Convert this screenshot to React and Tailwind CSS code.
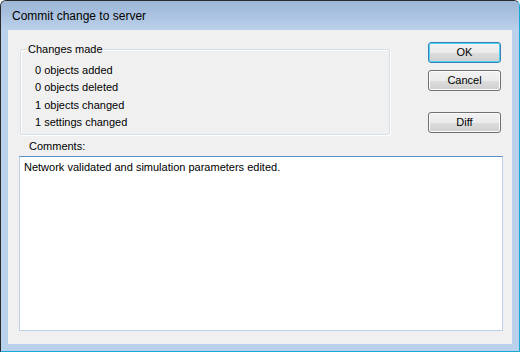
import React from 'react';

const ui = { fontFamily: 'Tahoma, "Liberation Sans", Arial, sans-serif' };

function Button({ children, isDefault }) {
  return (
    <button
      className={`w-[73px] h-[21px] rounded-[3px] border text-[11px] text-black leading-none ${
        isDefault
          ? 'border-[#3c7fb1] shadow-[inset_0_0_0_1px_#48d4f9]'
          : 'border-[#707070] shadow-[inset_0_0_0_1px_#fcfcfc]'
      } bg-[linear-gradient(#f2f2f2_0%,#ebebeb_50%,#dddddd_51%,#cfcfcf_100%)]`}
      style={ui}
    >
      {children}
    </button>
  );
}

export default function App() {
  const stats = ['0 objects added', '0 objects deleted', '1 objects changed', '1 settings changed'];

  return (
    <div className="w-[520px] h-[352px] bg-white">
      <div className="w-[520px] h-[352px] flex flex-col border border-[#2a2a2a] border-r-[#1aa9d6] border-b-[#1aa9d6] rounded-t-[6px] bg-[#b9d1ea] overflow-hidden">
        {/* Title bar */}
        <div className="h-[29px] shrink-0 flex items-center pl-[11px] bg-[linear-gradient(#9db5d7,#b9d1ea)]">
          <span className="text-[12px] text-black" style={{ fontFamily: '"Segoe UI", "Liberation Sans", Arial, sans-serif' }}>
            Commit change to server
          </span>
        </div>

        {/* Client area */}
        <div className="flex-1 mx-[7px] mb-[7px] bg-[#f0f0f0] flex flex-col text-[11px] text-black" style={ui}>
          <div className="flex pt-[12px]">
            {/* Group box */}
            <div className="relative ml-[12px] mt-[7px] w-[370px] h-[86px] rounded-[3px] border border-[#d5dfe5] shadow-[inset_1px_1px_0_#ffffff,1px_1px_0_#ffffff]">
              <span className="absolute left-[6px] -top-[8px] px-[1px] bg-[#f0f0f0] leading-[14px]">Changes made</span>
              <div className="flex flex-col pt-[13px] pl-[14px] gap-[3.4px]">
                {stats.map((s) => (
                  <div key={s} className="leading-[14px]">{s}</div>
                ))}
              </div>
            </div>

            {/* Buttons */}
            <div className="ml-[38px] flex flex-col">
              <Button isDefault>OK</Button>
              <div className="h-[7px]" />
              <Button>Cancel</Button>
              <div className="h-[21px]" />
              <Button>Diff</Button>
            </div>
          </div>

          <div className="ml-[21px] mt-[4px] leading-[14px]">Comments:</div>

          <div className="ml-[11px] mt-[3px] w-[484px] h-[175px] bg-white border border-[#bcd2e8] border-t-[#5b8fc6] px-[4px] pt-[3px] leading-[14px]">
            Network validated and simulation parameters edited.
          </div>
        </div>
      </div>
    </div>
  );
}
